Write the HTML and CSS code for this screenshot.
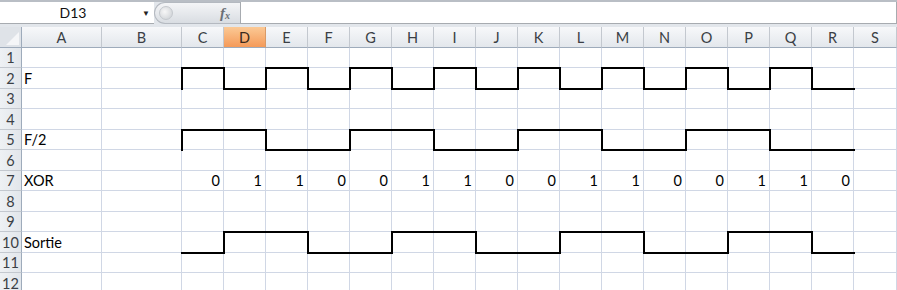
FILE: index.html
```html
<!DOCTYPE html>
<html lang="fr">
<head>
    <meta charset="UTF-8">
    <title>Classeur - F XOR F/2</title>
    <link rel="stylesheet" href="styles.css">
</head>
<body>
    <div class="window">
        <!-- barre de formule -->
        <div class="formula-bar">
            <div class="name-box">
                <span class="cell-ref">D13</span>
                <span class="drop">&#9660;</span>
            </div>
            <div class="fx-pill">
                <span class="knob"></span>
                <span class="fx">f<sub>x</sub></span>
            </div>
            <div class="formula-input"></div>
        </div>

        <!-- feuille -->
        <div class="sheet">
            <div class="grid" id="grid"></div>

            <!-- chronogrammes (dessinés par-dessus la grille) -->
            <svg class="waves" width="897" height="263" viewBox="0 27 897 263">
                <path d="M182 89 V68 H224 V89 H266 V68 H308 V89 H350 V68 H392 V89 H434 V68 H476 V89 H518 V68 H560 V89 H602 V68 H644 V89 H686 V68 H728 V89 H770 V68 H812 V89 H854"/>
                <path d="M182 150 V130 H266 V150 H350 V130 H434 V150 H518 V130 H602 V150 H686 V130 H770 V150 H854"/>
                <path d="M182 253 H224 V232 H308 V253 H392 V232 H476 V253 H560 V232 H644 V253 H728 V232 H812 V253 H854"/>
            </svg>
        </div>
    </div>

    <script>
        // construit la grille : en-têtes + 12 lignes
        const grid = document.getElementById('grid');
        const cols = ['A','B','C','D','E','F','G','H','I','J','K','L','M','N','O','P','Q','R','S'];
        const labels = { 2: 'F', 5: 'F/2', 7: 'XOR', 10: 'Sortie' };
        const xor = [0,1,1,0,0,1,1,0,0,1,1,0,0,1,1,0];

        function cell(cls, text) {
            const d = document.createElement('div');
            d.className = cls;
            if (text !== undefined) d.textContent = text;
            grid.appendChild(d);
        }

        // ligne d'en-tête
        cell('corner');
        cols.forEach(c => cell(c === 'D' ? 'col-head active' : 'col-head', c));

        for (let r = 1; r <= 12; r++) {
            cell('row-head', r);
            cols.forEach((c, i) => {
                if (i === 0 && labels[r]) {
                    cell('cell label', labels[r]);
                } else if (r === 7 && i >= 2 && i <= 17) {
                    cell('cell num', xor[i - 2]);
                } else {
                    cell('cell');
                }
            });
        }
    </script>
</body>
</html>
```

FILE: styles.css
```css
/* base */
* {
    margin: 0;
    padding: 0;
    box-sizing: border-box;
}

body {
    width: 897px;
    height: 290px;
    overflow: hidden;
    background: #ffffff;
    font-family: 'Lato', 'Noto Sans', sans-serif;
    font-size: 14.5px;
    color: #000;
}

.window {
    width: 897px;
    height: 290px;
    display: flex;
    flex-direction: column;
}

/* barre de formule */
.formula-bar {
    height: 27px;
    display: flex;
    align-items: stretch;
    background: #e2e6eb;
    border-top: 2px solid #b9bec5;
    padding-bottom: 3px;
}

.name-box {
    width: 154px;
    display: flex;
    align-items: center;
    background: #fff;
    border-bottom: 1px solid #a7abb0;
    padding-right: 4px;
}
.cell-ref {
    flex: 1;
    text-align: center;
    font-size: 14px;
    color: #111;
    padding-left: 4px;
}
.drop {
    font-size: 8px;
    color: #222;
}

.fx-pill {
    width: 86px;
    display: flex;
    align-items: center;
    justify-content: space-between;
    background: linear-gradient(#f4f5f7, #d9dde2);
    border: 1px solid #b4b9c0;
    border-right: none;
    border-radius: 11px 0 0 11px;
    padding: 0 10px 0 4px;
}
.knob {
    width: 14px;
    height: 14px;
    border-radius: 50%;
    background: radial-gradient(circle at 40% 40%, #f7f7f7, #c9cdd2);
    border: 1px solid #c4c8cd;
}
.fx {
    font-family: 'Liberation Serif', serif;
    font-style: italic;
    font-weight: bold;
    font-size: 15px;
    color: #6a6f76;
}
.fx sub {
    font-size: 10px;
    vertical-align: -1px;
}

.formula-input {
    flex: 1;
    background: #fff;
    border: 1px solid #a7abb0;
    border-top: none;
}

/* feuille */
.sheet {
    position: relative;
    flex: 1;
    overflow: hidden;
}

.grid {
    display: grid;
    grid-template-columns: 22px 80px 80px repeat(16, 42px) 43px;
    grid-template-rows: 21px 20px 21px 20px 21px 20px 21px 20px 21px 20px 21px 20px 21px;
}

.corner {
    position: relative;
    background: #dfe3e8;
    border-right: 1px solid #9eabbb;
    border-bottom: 1px solid #9eabbb;
}
.corner::after {
    /* petit triangle du coin */
    content: "";
    position: absolute;
    right: 2px;
    bottom: 2px;
    border-left: 13px solid transparent;
    border-bottom: 13px solid #f5f6f8;
}

.col-head {
    display: flex;
    align-items: center;
    justify-content: center;
    background: linear-gradient(#f7f8fa, #e3e7ec);
    border-right: 1px solid #c3c8cf;
    border-bottom: 1px solid #9eabbb;
    color: #3b3f45;
    font-size: 14.5px;
}
.col-head.active {
    background: linear-gradient(#fbc995, #f59a59);
    border-right-color: #d99a67;
    color: #39291c;
}

.row-head {
    display: flex;
    align-items: center;
    justify-content: center;
    background: linear-gradient(90deg, #eef1f4, #e2e6eb);
    border-right: 1px solid #9eabbb;
    border-bottom: 1px solid #c3c8cf;
    color: #3b3f45;
    font-size: 14.5px;
}

.cell {
    border-right: 1px solid #d0d7e5;
    border-bottom: 1px solid #d0d7e5;
    background: #fff;
    display: flex;
    align-items: center;
    white-space: nowrap;
}
.cell.label {
    padding-left: 2px;
}
.cell.num {
    justify-content: flex-end;
    padding-right: 3px;
}

/* chronogrammes */
.waves {
    position: absolute;
    top: 0;
    left: 0;
    pointer-events: none;
}
.waves path {
    fill: none;
    stroke: #000;
    stroke-width: 2;
    stroke-linecap: square;
}
```
